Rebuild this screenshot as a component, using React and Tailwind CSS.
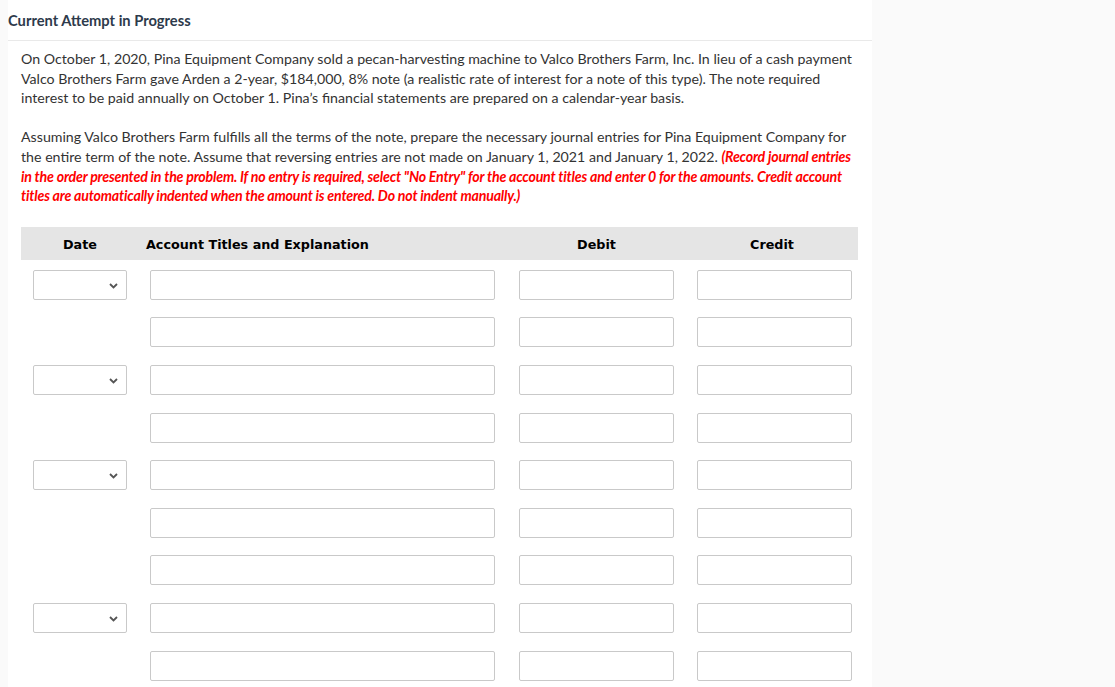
const ROWS = [true, false, true, false, true, false, false, true, false];

function Chevron() {
  return (
    <svg width="9" height="6" viewBox="0 0 9 6" className="absolute right-[8px] top-[12px]">
      <path d="M1 1 L4.5 4.5 L8 1" fill="none" stroke="#555" strokeWidth="1.8" />
    </svg>
  );
}

function Row({ date }) {
  return (
    <div className="flex h-[30px]">
      <div className="w-[118px] flex justify-center">
        {date && (
          <div className="relative w-[94px] h-[30px] border border-[#c9c9c9] rounded-[2px] bg-white">
            <Chevron />
          </div>
        )}
      </div>
      <div className="w-[368px] pl-[11px]">
        <div className="w-[345px] h-[30px] border border-[#c9c9c9] rounded-[2px] bg-white" />
      </div>
      <div className="w-[179px] pl-[12px]">
        <div className="w-[155px] h-[30px] border border-[#c9c9c9] rounded-[2px] bg-white" />
      </div>
      <div className="w-[172px] pl-[11px]">
        <div className="w-[155px] h-[30px] border border-[#c9c9c9] rounded-[2px] bg-white" />
      </div>
    </div>
  );
}

export default function App() {
  return (
    <div className="flex min-h-[687px] bg-[#fafafa] font-['Lato',sans-serif]">
      <div className="w-[8px]" />
      <div className="w-[864px] bg-white">
        <div className="h-[41px] flex items-center border-b border-[#e9e9e9] text-[14.7px] font-bold text-[#2d3a4b]">
          Current Attempt in Progress
        </div>
        <div className="px-[13px] pt-[8px] text-[14.2px] leading-[19.6px] text-[#333]">
          <p>
            On October 1, 2020, Pina Equipment Company sold a pecan-harvesting machine to Valco Brothers Farm, Inc. In lieu of a cash payment
            Valco Brothers Farm gave Arden a 2-year, $184,000, 8% note (a realistic rate of interest for a note of this type). The note required
            interest to be paid annually on October 1. Pina’s financial statements are prepared on a calendar-year basis.
          </p>
          <p className="mt-[19.6px]">
            Assuming Valco Brothers Farm fulfills all the terms of the note, prepare the necessary journal entries for Pina Equipment Company for
            the entire term of the note. Assume that reversing entries are not made on January 1, 2021 and January 1, 2022.{' '}
            <span className="text-[#ff0000] font-bold italic tracking-[-0.2px]">
              (Record journal entries in the order presented in the problem. If no entry is required, select "No Entry" for the account titles and enter 0 for the amounts. Credit account titles are automatically indented when the amount is entered. Do not indent manually.)
            </span>
          </p>
        </div>
        <div className="ml-[13px] mt-[21px] w-[837px]">
          <div className="flex h-[33px] pt-[2px] items-center bg-[#e5e5e5] font-['DejaVu_Sans',sans-serif] text-[12.75px] font-bold text-black">
            <div className="w-[118px] text-center">Date</div>
            <div className="w-[368px] pl-[7px]">Account Titles and Explanation</div>
            <div className="w-[179px] text-center">Debit</div>
            <div className="w-[172px] text-center">Credit</div>
          </div>
          <div className="mt-[10px] flex flex-col gap-[17.6px]">
            {ROWS.map((d, i) => (
              <Row key={i} date={d} />
            ))}
          </div>
        </div>
      </div>
    </div>
  );
}
